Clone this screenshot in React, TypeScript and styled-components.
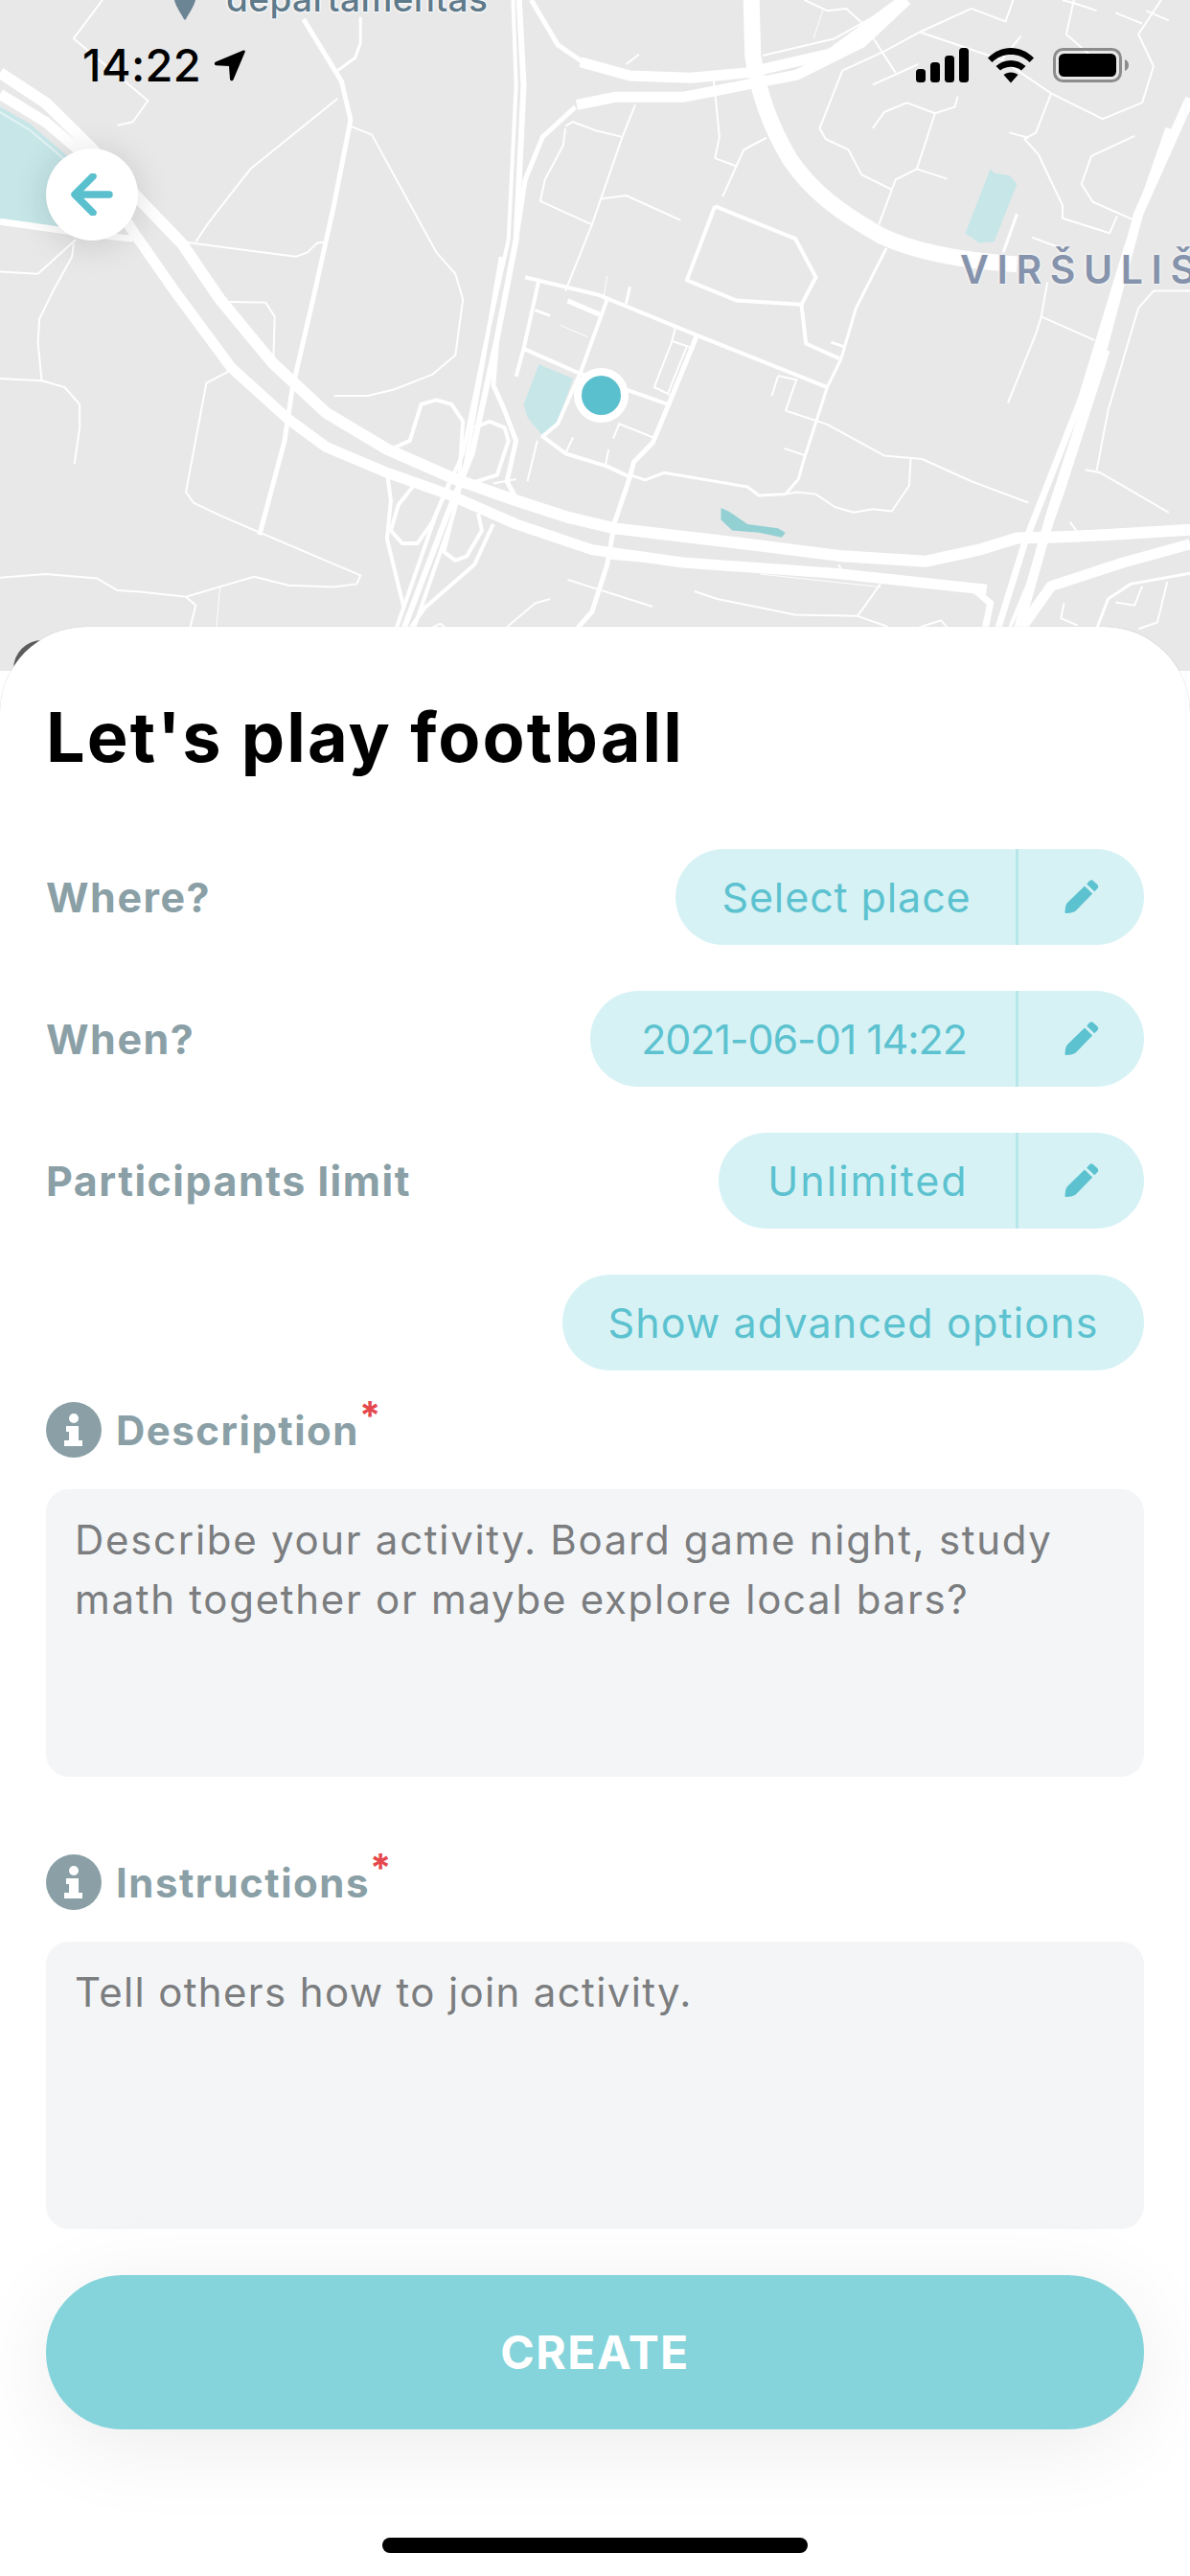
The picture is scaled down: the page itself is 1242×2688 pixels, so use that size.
import React from 'react';
import styled, { createGlobalStyle } from 'styled-components';

const Global = createGlobalStyle`
  html, body { margin: 0; padding: 0; background: #fff; }
  * { box-sizing: border-box; }
`;
const FONT = `"Inter", "Liberation Sans", sans-serif`;

const Screen = styled.div`
  width: 1242px; height: 2688px; overflow: hidden; position: relative;
  background: #fff; font-family: ${FONT};
  display: flex; flex-direction: column;
`;
const MapArea = styled.div`
  position: relative; height: 700px; flex: none; margin-bottom: -46px; background: #e8e8e8;
`;
const MapSvg = styled.svg`
  display: block; width: 1242px; height: 700px;
  path, polyline { vector-effect: non-scaling-stroke; fill: none; stroke: #fff; stroke-linejoin: round; stroke-linecap: butt; }
  polygon { stroke: none; }
`;
const DarkCorner = styled.div`
  position: absolute; left: 14px; top: 668px; width: 60px; height: 60px; border-radius: 50%;
  background: #5c5c5c;
`;
const PlaceLabel = styled.span`
  position: absolute; left: 236px; top: -24px; font-size: 37px; font-weight: 500;
  letter-spacing: 0.4px; color: #5f7a8a; white-space: nowrap;
  text-shadow: 0 0 3px #fff, 0 0 3px #fff, 0 0 3px #fff;
`;
const PinTip = styled.svg`
  position: absolute; left: 182px; top: 0; width: 22px; height: 21px;
`;
const AreaLabel = styled.span`
  position: absolute; left: 1002px; top: 256px; font-size: 41px; font-weight: 600;
  letter-spacing: 8.6px; color: #8593ac; white-space: nowrap;
  text-shadow: 0 0 3px #f4f4f4, 0 0 3px #f4f4f4, 0 0 3px #f4f4f4;
`;
const Marker = styled.div`
  position: absolute; left: 599px; top: 384px; width: 57px; height: 57px; border-radius: 50%;
  background: #5bc0ce; border: 8px solid #fff;
`;
const StatusBar = styled.div`
  position: absolute; left: 86px; right: 64px; top: 44px; height: 48px;
  display: flex; align-items: center; justify-content: space-between;
`;
const StatusLeft = styled.div`display: flex; align-items: center; gap: 13px;`;
const Time = styled.span`font-size: 47px; font-weight: 500; letter-spacing: 0.3px; color: #000; line-height: 48px;`;
const StatusRight = styled.div`display: flex; align-items: center; gap: 20px;`;
const BackButton = styled.button`
  position: absolute; left: 48px; top: 155px; width: 96px; height: 96px; border-radius: 50%;
  border: 0; padding: 0; background: #fff; box-shadow: 0 4px 36px rgba(0,0,0,.14);
  display: flex; align-items: center; justify-content: center;
`;
const Sheet = styled.div`
  position: relative; flex: 1; display: flex; flex-direction: column;
  background: #fff; border-radius: 90px 90px 0 0; padding: 72px 48px 0;
  box-shadow: 0 0 1px rgba(0,0,0,.25);
`;
const Title = styled.h1`
  margin: 0 0 74px; font-size: 72px; line-height: 86px; font-weight: 700; color: #000; letter-spacing: 2.1px;
`;
const Rows = styled.div`display: flex; flex-direction: column; gap: 48px;`;
const Row = styled.div`display: flex; align-items: center; justify-content: space-between; min-height: 100px;`;
const RowLabel = styled.span`
  font-size: 43px; font-weight: 700; color: #8aa0a6; letter-spacing: 1.5px;
`;
const Pill = styled.div`
  display: flex; align-items: stretch; height: 100px; border-radius: 50px; background: #d7f2f5;
  color: #5cc2cf; font-size: 43px; font-weight: 400;
`;
const PillText = styled.span`
  display: flex; align-items: center; justify-content: center; padding: 0 ${p => p.$pad}px 0 ${p => p.$pad + 2}px;
  width: ${p => p.$w}px; white-space: nowrap; letter-spacing: ${p => p.$ls ?? 0.9}px;
`;
const PillIcon = styled.span`
  width: 134px; display: flex; align-items: center; justify-content: center;
  border-left: 3px solid #b8e7eb;
`;
const AdvancedPill = styled(Pill)`
  width: 607px; justify-content: center; align-items: center; letter-spacing: 1.15px;
`;
const FieldLabel = styled.div`
  display: flex; align-items: center; gap: 15px; height: 58px; margin-bottom: 33px;
  margin-top: ${p => p.$top}px;
`;
const InfoDot = styled.span`
  width: 58px; height: 58px; border-radius: 50%; background: #8aa0a6; flex: none;
  display: flex; align-items: center; justify-content: center;
`;
const FieldText = styled.span`
  position: relative; font-size: 42px; font-weight: 700; color: #8aa0a6; letter-spacing: 1.5px;
`;
const Star = styled.span`
  position: absolute; left: 100%; top: -14px; margin-left: 0; font-size: 40px; line-height: 48px; font-weight: 700; color: #e5484d;
`;
const TextBox = styled.div`
  height: 300px; border-radius: 24px; background: #f4f5f7; padding: 22px 30px 0;
  font-size: 42px; line-height: 62px; color: #7b7d7f; letter-spacing: ${p => p.$ls}px;
`;
const CreateButton = styled.button`
  margin-top: 48px; height: 161px; width: 1146px; flex: none; border: 0; border-radius: 80px; background: #86d4db;
  color: #fff; font-family: ${FONT}; font-size: 48px; font-weight: 700; letter-spacing: 1.4px;
  box-shadow: 0 16px 90px rgba(0,0,0,.08);
`;
const HomeBar = styled.div`
  position: absolute; left: 399px; top: 2648px; width: 444px; height: 16px; border-radius: 8px; background: #000;
`;

type R = [number, string];
const roads: R[] = [
  // highways
  [12, 'M0 170 L60 240 L120 345 L175 450 L240 570 L290 700 L360 850 L430 965 L510 1050 L600 1120 L680 1170 L750 1210 L810 1235 L1000 1275 L1110 1300 L1220 1312 L1290 1285 L1340 1258 L1400 1255 L1460 1250 L1568 1238'],
  [11, 'M0 220 L60 285 L110 360 L175 540 L230 680 L305 860 L380 980 L430 1045 L510 1105 L590 1155 L680 1225 L780 1285 L900 1315 L1100 1340 L1300 1378'],
  [11, 'M1568 1272 L1480 1315 L1385 1370 L1345 1470'],
  [7, 'M1285 1380 L1305 1410 L1298 1470'],
  [6, 'M684 0 L690 200 L680 560 L655 790 L622 1060 L590 1200 L532 1470'],
  [4, 'M676 0 L680 200 L670 560 L640 800 L610 1060 L575 1200 L522 1470'],
  [4, 'M660 600 L640 810 L615 1070 L598 1200 L545 1470'],
  [10, 'M1568 230 L1500 500 L1440 900 L1385 1200 L1342 1470'],
  [7, 'M1540 300 L1485 580 L1425 930 L1350 1270 L1315 1470'],
  [4, 'M1460 820 L1400 1150 L1370 1300 L1330 1470'],
  // thick curve
  [17, 'M990 0 L992 130 C1000 230 1020 310 1040 370 C1070 450 1110 500 1160 550 C1200 585 1260 608 1340 618'],
  [11, 'M765 145 L830 177 L910 182 L985 170 L1095 125 L1190 0'],
  [11, 'M760 245 L810 227 L900 227 L1050 175 L1135 100 L1195 0'],
  [5, 'M700 0 L735 105 L768 145'],
  [5, 'M758 250 L715 320 L692 420 L680 560'],
  // left mid road
  [5, 'M400 45 L450 190 L462 280 L440 480 L415 680 L385 910 L375 1030 L342 1250'],
  [2, 'M462 295 L490 315 L575 590 L600 640 L610 700 L600 830 L570 875 L520 910 L485 925 L440 925'],
  [3, 'M475 40 L475 100 L468 135 L445 165'],
  [2, 'M445 230 L330 395 L275 520 L258 565'],
  [2, 'M240 565 L390 600 L405 590 L418 568 L430 565'],
  [2, 'M135 0 L97 90 L195 235 L175 285 L155 293'],
  [2, 'M290 705 L350 707 L362 740 L360 850'],
  [2, 'M100 560 L50 640 L0 635'],
  [2, 'M97 570 L95 600 L70 680 L52 745 L50 800 L55 890'],
  [2, 'M0 885 L55 890 L85 905 L105 945 L105 1000 L98 1085'],
  [2, 'M305 865 L272 895 L245 1150 L255 1175 L290 1205 L475 1345 L470 1365 L440 1372 L380 1368 L335 1348 L245 1395 L185 1383 L155 1380 L128 1352 L60 1342 L0 1350'],
  [2, 'M245 1395 L258 1415 L250 1470'],
  [1, 'M290 1370 L285 1470'],
  [4, 'M510 1105 L515 1170 L510 1260 L532 1420'],
  [4, 'M545 1135 L525 1180 L515 1240 L530 1270 L550 1270 L570 1220 L595 1115'],
  [4, 'M515 1050 L540 1030 L555 945 L575 935 L595 945 L610 985 L605 1120'],
  [4, 'M630 1200 L635 1240 L615 1300 L600 1310 L585 1290 L600 1180'],
  [4, 'M625 1000 L645 985 L665 1000 L670 1030 L655 1110 L620 1130'],
  [5, 'M655 790 L650 900 L665 960 L680 1030 L668 1125 L680 1165'],
  [4, 'M650 1225 L625 1320 L560 1420 L540 1470'],
  [2, 'M680 1120 L650 1130'],
  // grid around marker
  [4, 'M692 648 L790 690 L920 785 L1090 905'],
  [4, 'M710 655 L690 815 L680 880'],
  [4, 'M800 700 L765 870 L735 990 L715 1020 L745 1060 L800 1090 L830 1115'],
  [5, 'M748 703 L790 735'],
  [3, 'M830 670 L825 710'],
  [1, 'M800 645 L795 700'],
  [1, 'M738 760 L775 788'],
  [3, 'M705 725 L725 738'],
  [4, 'M690 815 L760 870 L880 945'],
  [5, 'M918 785 L880 950 L860 1035 L835 1080 L830 1115 L810 1220 L800 1320 L780 1430 L760 1470'],
  [2, 'M890 765 L885 800 L862 905 L885 925'],
  [2, 'M885 797 L915 815'],
  [2, 'M905 810 L880 920'],
  [2, 'M815 990 L860 1022'],
  [2, 'M816 990 L808 1025'],
  [2, 'M755 1022 L745 1060'],
  [2, 'M802 1050 L798 1085'],
  [2, 'M708 1030 L695 1125'],
  // polygon block
  [4, 'M942 482 L1048 558 L1075 648 L1056 712 L970 702 L905 655 L942 482'],
  [4, 'M1056 712 L1062 803 L1106 838'],
  [3, 'M1095 800 L1112 810'],
  [3, 'M1168 580 L1128 720 L1108 840 L1090 905 L1060 1070 L1052 1120 L1035 1155 L1000 1158 L985 1138 L875 1105 L850 1122 L830 1110'],
  [2, 'M1035 960 L1090 992 L1165 1065 L1215 1073 L1280 1125 L1355 1175'],
  [2, 'M1050 885 L1035 960'],
  [2, 'M1025 878 L1050 888'],
  [2, 'M1025 880 L1017 925'],
  [2, 'M1033 1048 L1062 1065'],
  [2, 'M1200 1072 L1198 1135 L1175 1195 L1150 1190 L1125 1198 L1100 1185 L1075 1155 L1050 1150 L1035 1155'],
  // upper middle lanes
  [2, 'M837 245 L820 320 L780 525 L745 680'],
  [2, 'M745 295 L755 285 L785 305 L820 320'],
  [2, 'M745 300 L742 340 L718 420 L712 470 L780 525'],
  [2, 'M792 465 L825 457 L897 515'],
  [2, 'M825 150 L842 127'],
  [2, 'M940 180 L948 320 L942 370 L970 388'],
  [2, 'M1010 322 L980 350 L952 460'],
  // upper right grid
  [2, 'M1060 0 L1090 25 L1115 20 L1140 60 L1180 170'],
  [1, 'M1085 20 L1072 90'],
  [2, 'M1005 130 L1100 90 L1160 30'],
  [2, 'M1165 120 L1212 75 L1280 20'],
  [2, 'M1212 75 L1320 140 L1385 218 L1453 278 L1505 240 L1520 155 L1500 80 L1530 0'],
  [2, 'M1280 20 L1325 50 L1335 0'],
  [2, 'M1320 140 L1345 85'],
  [2, 'M1110 165 L1165 120'],
  [2, 'M1150 198 L1210 150'],
  [2, 'M1110 165 L1080 300 L1088 325 L1118 350 L1135 408 L1175 443'],
  [2, 'M1385 218 L1365 310 L1350 325 L1368 360 L1400 480 L1400 510 L1462 545 L1472 505'],
  [2, 'M1150 300 L1165 262 L1195 240 L1232 265 L1258 250 L1262 225'],
  [2, 'M1232 265 L1208 395 L1180 420 L1158 525'],
  [2, 'M1208 395 L1248 418'],
  [2, 'M1330 310 L1355 322'],
  [2, 'M1495 318 L1438 365 L1425 430 L1440 472 L1495 515'],
  [2, 'M1400 0 L1420 10 L1445 25'],
  [2, 'M1470 30 L1505 55'],
  [2, 'M1510 25 L1540 48'],
  [2, 'M1415 0 L1405 80 L1450 150'],
  [3, 'M1340 500 L1322 590'],
  [2, 'M1360 555 L1395 578'],
  [2, 'M1380 660 L1372 740 L1365 780 L1328 942'],
  [2, 'M1372 740 L1442 795'],
  [2, 'M1568 680 L1520 680 L1500 720 L1460 960 L1445 1100'],
  [2, 'M1430 1098 L1450 1105 L1540 1198'],
  [2, 'M1410 1220 L1420 1245 L1460 1248'],
  // lower
  [2, 'M800 1305 L915 1322'],
  [2, 'M1105 1320 L1108 1330'],
  [1, 'M1002 1342 L1160 1372'],
  [2, 'M1160 1365 L1130 1440 L1048 1437 L945 1400 L915 1382'],
  [2, 'M748 1355 L860 1418'],
  [2, 'M1130 1440 L1170 1465'],
  [2, 'M725 1400 L705 1410 L665 1470'],
  [2, 'M1205 1470 L1240 1450 L1250 1470'],
  [3, 'M1568 1340 L1490 1365 L1460 1400 L1445 1470'],
  [2, 'M1505 1370 L1495 1415 L1470 1408'],
  [2, 'M1538 1360 L1525 1455 L1500 1470'],
  [2, 'M1402 1410 L1398 1445 L1420 1462'],
  [2, 'M565 1470 L580 1458 L590 1470'],
];

const Pencil = () => (
  <svg width="36" height="36" viewBox="0 0 36 36" aria-hidden>
    <path d="M26.2 1.2 a3 3 0 0 1 3.9 0 l4.2 3.9 a3 3 0 0 1 0 4.1 l-3 3.1 -8.2 -7.9z" fill="#5cc2cf" />
    <path d="M21 6.5 l8.2 8 -16.5 16.9 c-1.8 1.7 -3.5 2.6 -6 3 l-4.6 .6 c-1 .1 -1.7 -.6 -1.6 -1.6 l.5 -4.6 c.3 -2.4 1.2 -4.2 3 -5.9z" fill="#5cc2cf" />
  </svg>
);

const InfoGlyph = () => (
  <svg width="22" height="34" viewBox="0 0 22 34" aria-hidden>
    <circle cx="11" cy="5" r="5" fill="#fff" />
    <path d="M3 13 h13 v15 h4 v6 H1 v-6 h5 v-9 H3z" fill="#fff" />
  </svg>
);

const Info = ({ label }: { label: string }) => (
  <>
    <InfoDot><InfoGlyph /></InfoDot>
    <FieldText>{label}<Star>*</Star></FieldText>
  </>
);

export default function App() {
  return (
    <Screen>
      <Global />
      <MapArea>
        <MapSvg viewBox="0 0 1568 1568" preserveAspectRatio="none" aria-hidden>
          <polygon points="0,250 40,290 115,405 120,548 0,515" fill="#c6e6e8" />
          <polygon points="1305,395 1310,405 1330,410 1340,430 1310,565 1290,568 1280,555 1272,545" fill="#c6e6e8" />
          <polygon points="710,852 755,885 735,985 715,1018 695,975 690,945" fill="#c6e6e8" />
          <polygon points="950,1187 960,1195 985,1225 1025,1235 1035,1245 1030,1256 1000,1245 965,1240 950,1215" fill="#93d0d3" />
          {roads.map(([w, d], i) => (
            <path key={i} d={d} strokeWidth={w} />
          ))}
          <path d="M0 262 L40 305 L100 395" strokeWidth={2} opacity={0.5} />
          <path d="M0 518 L120 548 L175 558" strokeWidth={7} />
        </MapSvg>
        <DarkCorner />
        <PinTip viewBox="0 0 22 21" aria-hidden><path d="M0 0 H22 C20 8 15 14 12 20 Q11 21.5 10 20 C7 14 2 8 0 0Z" fill="#6c8595" /></PinTip>
        <PlaceLabel>departamentas</PlaceLabel>
        <AreaLabel>VIRŠULIŠ</AreaLabel>
        <Marker />
        <StatusBar>
          <StatusLeft>
            <Time>14:22</Time>
            <svg width="33" height="33" viewBox="0 0 33 33" aria-hidden><path d="M31 .6 L2.2 12.6 C.2 13.6 .6 16 2.6 16.2 L16 17 L17 30.5 C17.2 32.6 19.8 33 20.6 31 L32.6 2.4 C33.2 1 32.2 0 31 .6Z" fill="#000" /></svg>
          </StatusLeft>
          <StatusRight>
            <svg width="55" height="36" viewBox="0 0 55 36" aria-hidden>
              <rect x="0" y="22" width="10" height="14" rx="3.5" /><rect x="15" y="15" width="10" height="21" rx="3.5" />
              <rect x="30" y="8" width="10" height="28" rx="3.5" /><rect x="45" y="0" width="10" height="36" rx="3.5" />
            </svg>
            <svg width="48" height="37" viewBox="0 0 48 37" aria-hidden>
              <path d="M24 0 C15 0 7 3.5 0 10.5 L4.5 15 C10 9.5 16.5 7 24 7 S38 9.5 43.5 15 L48 10.5 C41 3.5 33 0 24 0Z" />
              <path d="M24 13 C18 13 13 15 8.5 19 L13 23.5 C16 21 20 19.8 24 19.8 S32 21 35 23.5 L39.5 19 C35 15 30 13 24 13Z" />
              <path d="M24 25.5 C21 25.5 18.5 26.5 16.5 28 L24 36.5 L31.5 28 C29.5 26.5 27 25.5 24 25.5Z" />
            </svg>
            <svg width="79" height="36" viewBox="0 0 79 36" aria-hidden>
              <rect x="1.5" y="1.5" width="69" height="33" rx="9" fill="none" stroke="#8c8c8c" strokeWidth="3" />
              <rect x="6" y="6" width="60" height="24" rx="5.5" fill="#000" />
              <path d="M75 12 C77.5 13 79 15 79 18 S77.5 23 75 24Z" fill="#8c8c8c" />
            </svg>
          </StatusRight>
        </StatusBar>
        <BackButton aria-label="Back">
          <svg width="44" height="44" viewBox="0 0 44 44" aria-hidden>
            <path d="M40 22 H5 M23 3 L4 22 L23 41" fill="none" stroke="#5bc0ce" strokeWidth="7.5" strokeLinecap="round" strokeLinejoin="round" />
          </svg>
        </BackButton>
      </MapArea>
      <Sheet>
        <Title>Let's play football</Title>
        <Rows>
          <Row>
            <RowLabel>Where?</RowLabel>
            <Pill><PillText $w={355} $pad={20}>Select place</PillText><PillIcon><Pencil /></PillIcon></Pill>
          </Row>
          <Row>
            <RowLabel>When?</RowLabel>
            <Pill><PillText $w={444} $pad={20} $ls={-1.1}>2021-06-01 14:22</PillText><PillIcon><Pencil /></PillIcon></Pill>
          </Row>
          <Row>
            <RowLabel>Participants limit</RowLabel>
            <Pill><PillText $w={310} $pad={20} $ls={2}>Unlimited</PillText><PillIcon><Pencil /></PillIcon></Pill>
          </Row>
          <Row>
            <span />
            <AdvancedPill>Show advanced options</AdvancedPill>
          </Row>
        </Rows>
        <FieldLabel $top={33}><Info label="Description" /></FieldLabel>
        <TextBox $ls={1.7}>Describe your activity. Board game night, study<br />math together or maybe explore local bars?</TextBox>
        <FieldLabel $top={81}><Info label="Instructions" /></FieldLabel>
        <TextBox $ls={1.35}>Tell others how to join activity.</TextBox>
        <CreateButton>CREATE</CreateButton>
      </Sheet>
      <HomeBar />
    </Screen>
  );
}
